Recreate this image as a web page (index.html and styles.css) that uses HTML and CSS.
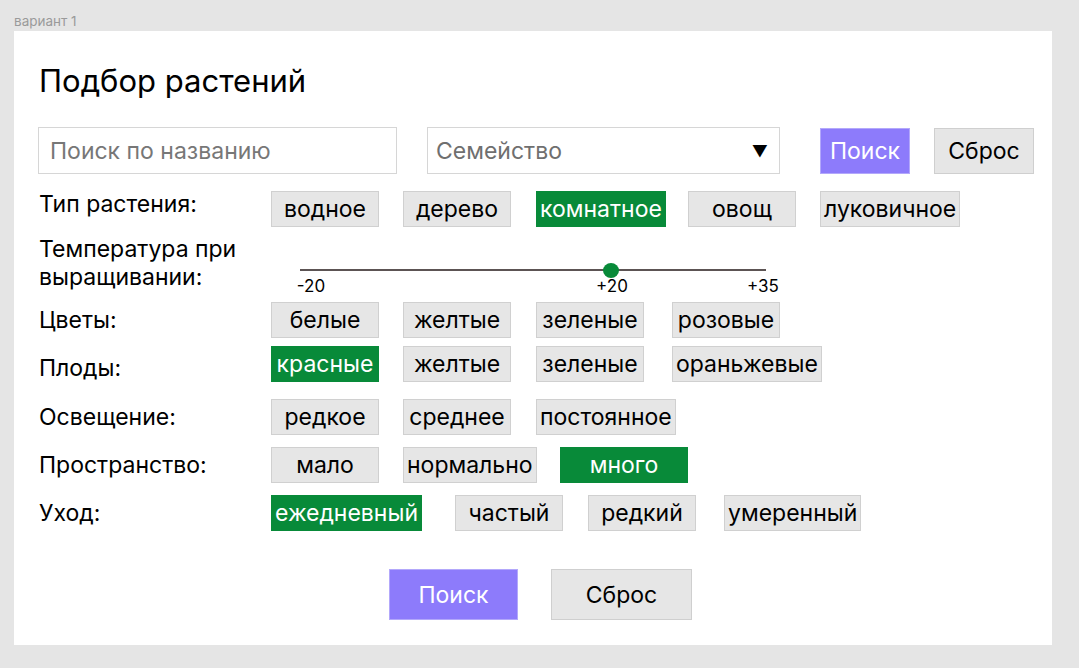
FILE: index.html
```html
<!DOCTYPE html>
<html lang="ru">
<head>
<meta charset="utf-8">
<title>Подбор растений</title>
<link rel="stylesheet" href="styles.css">
</head>
<body>
<div class="frame-label">вариант 1</div>
<main class="panel">
  <h1 class="title">Подбор растений</h1>

  <div class="search-row">
    <input class="field name-field" type="text" placeholder="Поиск по названию">
    <div class="field select-field"><span class="select-text">Семейство</span><span class="arrow">▼</span></div>
    <button class="btn btn-primary btn-top-search">Поиск</button>
    <button class="btn btn-top-reset">Сброс</button>
  </div>

  <div class="row row-type">
    <div class="label label-up">Тип растения:</div>
    <div class="chips cols-type">
      <span class="chip">водное</span>
      <span class="chip">дерево</span>
      <span class="chip chip-on">комнатное</span>
      <span class="chip">овощ</span>
      <span class="chip">луковичное</span>
    </div>
  </div>

  <div class="row row-temp">
    <div class="label label-two">Температура при<br>выращивании:</div>
    <div class="slider">
      <div class="track"></div>
      <div class="knob"></div>
      <span class="tick tick-min">-20</span>
      <span class="tick tick-cur">+20</span>
      <span class="tick tick-max">+35</span>
    </div>
  </div>

  <div class="row row-colors">
    <div class="label">Цветы:</div>
    <div class="chips cols-four">
      <span class="chip">белые</span>
      <span class="chip">желтые</span>
      <span class="chip">зеленые</span>
      <span class="chip">розовые</span>
    </div>
  </div>

  <div class="row row-fruits">
    <div class="label label-down">Плоды:</div>
    <div class="chips cols-four">
      <span class="chip chip-on">красные</span>
      <span class="chip">желтые</span>
      <span class="chip">зеленые</span>
      <span class="chip">ораньжевые</span>
    </div>
  </div>

  <div class="row row-light">
    <div class="label">Освещение:</div>
    <div class="chips cols-three">
      <span class="chip">редкое</span>
      <span class="chip">среднее</span>
      <span class="chip">постоянное</span>
    </div>
  </div>

  <div class="row row-space">
    <div class="label">Пространство:</div>
    <div class="chips cols-space">
      <span class="chip">мало</span>
      <span class="chip">нормально</span>
      <span class="chip chip-on chip-wide">много</span>
    </div>
  </div>

  <div class="row row-care">
    <div class="label">Уход:</div>
    <div class="chips cols-care">
      <span class="chip chip-on">ежедневный</span>
      <span class="chip">частый</span>
      <span class="chip">редкий</span>
      <span class="chip">умеренный</span>
    </div>
  </div>

  <div class="actions">
    <button class="btn btn-primary btn-big-search">Поиск</button>
    <button class="btn btn-big-reset">Сброс</button>
  </div>
</main>
</body>
</html>
```

FILE: styles.css
```css
* {
  box-sizing: border-box;
}

html, body {
  margin: 0;
  padding: 0;
}

body {
  background: #e5e5e5;
  font-family: "Inter", "Noto Sans", "Liberation Sans", sans-serif;
  color: #000;
  width: 1079px;
  height: 668px;
  overflow: hidden;
}

.frame-label {
  height: 31px;
  padding: 13px 0 0 14px;
  font-size: 13.5px;
  line-height: 16px;
  color: #9a9a9a;
}

.panel {
  margin-left: 14px;
  width: 1038px;
  height: 614px;
  background: #fff;
  padding: 32px 0 0 25px;
}

.title {
  margin: 0;
  font-size: 31px;
  font-weight: 400;
  line-height: 35px;
  letter-spacing: 0;
}

.search-row {
  display: flex;
  align-items: center;
  margin-top: 29px;
  height: 47px;
}

.field {
  height: 47px;
  border: 1px solid #d6d6d6;
  background: #fff;
  font-family: inherit;
  font-size: 23px;
  color: #000;
}

.name-field {
  width: 359px;
  margin-left: -1px;
  padding: 0 11px;
  outline: none;
}

.name-field::placeholder {
  color: #777;
}

.select-field {
  width: 353px;
  margin-left: 30px;
  display: flex;
  align-items: center;
  justify-content: space-between;
  padding: 0 11px 0 8px;
}

.select-text {
  color: #6f6f6f;
}

.arrow {
  font-size: 16px;
  color: #000;
}

.btn {
  font-family: inherit;
  font-size: 23px;
  border: 1px solid #cfcfcf;
  background: #e6e6e6;
  color: #000;
  padding: 0;
  cursor: pointer;
}

.btn-primary {
  background: #8d7bfb;
  border-color: #b3a8fb;
  color: #fff;
}

.btn-top-search {
  width: 90px;
  height: 46px;
  margin-left: 40px;
}

.btn-top-reset {
  width: 100px;
  height: 46px;
  margin-left: 24px;
}

.row {
  display: grid;
  grid-template-columns: 232px 1fr;
  align-items: center;
}

.label {
  font-size: 23px;
  line-height: 28px;
}

.label-up {
  position: relative;
  top: -5px;
}

.label-down {
  position: relative;
  top: 4px;
}

.chips {
  display: grid;
  align-items: center;
}

.cols-type {
  grid-template-columns: 132px 133px 152px 132px auto;
}

.cols-four {
  grid-template-columns: 132px 133px 136px auto;
}

.cols-three {
  grid-template-columns: 132px 133px auto;
}

.cols-space {
  grid-template-columns: 132px 157px auto;
}

.cols-care {
  grid-template-columns: 184px 133px 136px auto;
}

.chip {
  justify-self: start;
  min-width: 108px;
  height: 36px;
  padding: 0 3px;
  display: flex;
  align-items: center;
  justify-content: center;
  background: #e6e6e6;
  border: 1px solid #d0d0d0;
  font-size: 23px;
  white-space: nowrap;
}

.chip-on {
  background: #088a39;
  border-color: #088a39;
  color: #fff;
}

.chip-wide {
  min-width: 128px;
}

.row-type {
  margin-top: 17px;
}

.row-temp {
  margin-top: 8px;
  align-items: start;
}

.row-colors {
  margin-top: 11px;
}

.row-fruits {
  margin-top: 8px;
}

.row-light {
  margin-top: 17px;
}

.row-space {
  margin-top: 12px;
}

.row-care {
  margin-top: 12px;
}

.slider {
  position: relative;
  height: 56px;
}

.track {
  position: absolute;
  left: 29px;
  top: 34px;
  width: 466px;
  height: 2px;
  background: #5c5454;
}

.knob {
  position: absolute;
  left: 332px;
  top: 28px;
  width: 16px;
  height: 15px;
  border-radius: 50%;
  background: #088a39;
}

.tick {
  position: absolute;
  top: 42px;
  font-size: 17px;
  line-height: 18px;
  transform: translateX(-50%);
}

.tick-min {
  left: 40px;
}

.tick-cur {
  left: 341px;
}

.tick-max {
  left: 492px;
}

.actions {
  display: flex;
  margin-top: 38px;
  padding-left: 350px;
}

.btn-big-search {
  width: 129px;
  height: 51px;
}

.btn-big-reset {
  width: 141px;
  height: 51px;
  margin-left: 33px;
}
```
